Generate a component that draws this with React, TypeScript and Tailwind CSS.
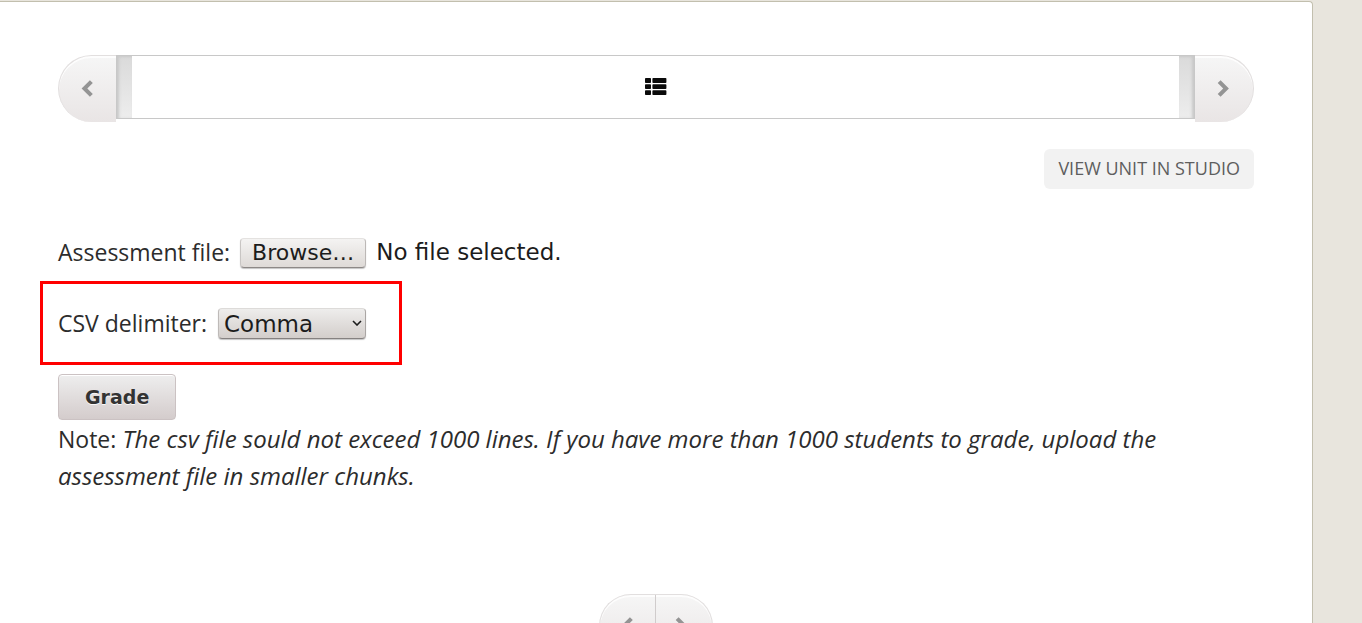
import { useState, type ReactNode } from "react";

type ArrowProps = { direction: "left" | "right" };

function Arrow({ direction }: ArrowProps) {
  return (
    <svg width="14" height="20" viewBox="0 0 14 20" fill="#949494" aria-hidden="true">
      <path d={direction === "left" ? "M8.9 1.2 11.8 3.9 6.3 9.4l5.5 5.5-2.9 2.8L.6 9.4z" : "M3.6 1.2.7 3.9l5.5 5.5-5.5 5.5 2.9 2.8 8.3-8.3z"} />
    </svg>
  );
}

function NavButton({ label, className, children }: { label: string; className: string; children: ReactNode }) {
  return (
    <button
      type="button"
      aria-label={label}
      className={`flex shrink-0 items-center justify-center border-[#e2dfdf] bg-linear-to-b from-[#f6f6f6] to-[#e9e5e5] shadow-[inset_0_2px_0_#fdfdfd] ${className}`}
    >
      {children}
    </button>
  );
}

function ListIcon() {
  return (
    <svg width="22" height="18" viewBox="0 0 22 18" fill="#0a0a0a" aria-hidden="true">
      <rect x="0" y="0" width="6" height="5" rx="0.8" />
      <rect x="7.4" y="0" width="14" height="5" rx="0.8" />
      <rect x="0" y="6.2" width="6" height="4.8" rx="0.8" />
      <rect x="7.4" y="6.2" width="14" height="4.8" rx="0.8" />
      <rect x="0" y="12.2" width="6" height="4.8" rx="0.8" />
      <rect x="7.4" y="12.2" width="14" height="4.8" rx="0.8" />
    </svg>
  );
}

export default function App() {
  const [fileName, setFileName] = useState("No file selected.");

  return (
    <div className="flex min-h-screen flex-col bg-[#e8e5dd] pt-px pr-12 font-['Open_Sans',sans-serif] text-[23px] leading-[37px] text-[#2c2c2c]">
      <main className="mr-px grow rounded-tr border-t border-r border-[#c2bfae] bg-white px-[58px] pt-[53px] pb-10">
        <nav aria-label="Unit sequence" className="flex items-start">
          <NavButton label="Previous" className="h-[67px] w-[58px] rounded-l-[35px] border-t border-l">
            <Arrow direction="left" />
          </NavButton>
          <div className="flex h-16 grow border border-[#c8c8c8]">
            <div className="w-[15px] bg-linear-to-b from-[#dadada] to-[#ededed] shadow-[inset_2px_1px_3px_#c8c8c8]" />
            <button type="button" aria-label="Unit" className="flex grow items-center justify-center">
              <ListIcon />
            </button>
            <div className="w-[15px] bg-linear-to-b from-[#dadada] to-[#ededed] shadow-[inset_-2px_1px_3px_#c8c8c8]" />
          </div>
          <NavButton label="Next" className="h-[67px] w-[59px] rounded-r-[35px] border-t border-r">
            <Arrow direction="right" />
          </NavButton>
        </nav>

        <div className="mt-[27px] flex justify-end">
          <a href="#studio" className="flex h-10 items-center rounded-md bg-[#f2f2f2] px-[14px] pb-0.5 text-[18px] text-[#5e5e5e]">
            VIEW UNIT IN STUDIO
          </a>
        </div>

        <form onSubmit={(event) => event.preventDefault()}>
          <div className="mt-[45px] flex h-[37px] items-center">
            <label htmlFor="assessment" className="flex items-center gap-[10px]">
              Assessment file:
              <span className="flex h-[30px] items-center rounded border border-t-[#e4e2e0] border-r-[#bcb8b6] border-b-[#8c8886] border-l-[#c8c5c3] bg-linear-to-b from-[#f4f3f2] to-[#dedad7] px-[11px] font-['DejaVu_Sans',sans-serif] text-[22px] text-[#1c1c1c] shadow-[0_1px_1px_#c4c4c4]">
                Browse…
              </span>
              <span className="font-['DejaVu_Sans',sans-serif] text-[#1c1c1c]">{fileName}</span>
            </label>
            <input
              id="assessment"
              type="file"
              className="sr-only"
              onChange={(event) => setFileName(event.target.files?.[0]?.name ?? "No file selected.")}
            />
          </div>

          <div className="mt-[10px] -ml-[18px] flex h-[84px] w-[362px] items-center border-3 border-[#ff0000] px-[15px]">
            <label htmlFor="delimiter">CSV delimiter:</label>
            <div className="relative ml-[11px] flex items-center">
              <select
                id="delimiter"
                className="h-[31px] w-[148px] appearance-none rounded border border-t-[#dddbd9] border-r-[#aaa6a4] border-b-[#858180] border-l-[#bebab8] bg-linear-to-b from-[#eeedec] to-[#d3cecb] pt-px pl-[5px] font-['DejaVu_Sans',sans-serif] text-[23px] leading-7 text-[#1c1c1c] shadow-[0_1px_1px_#c4c4c4]"
              >
                <option>Comma</option>
                <option>Semicolon</option>
              </select>
              <svg width="10" height="6" viewBox="0 0 10 6" fill="none" stroke="#1c1c1c" strokeWidth="1.6" className="pointer-events-none absolute right-1" aria-hidden="true">
                <path d="M1 1l4 4 4-4" />
              </svg>
            </div>
          </div>

          <button
            type="submit"
            className="mt-[9px] flex h-[46px] items-center rounded border border-[#cbc2c3] bg-linear-to-b from-[#eeeeee] to-[#d4cccc] px-[26px] font-['DejaVu_Sans',sans-serif] text-[19px] font-bold text-[#333333] shadow-[inset_0_1px_0_#ffffff] text-shadow-[0_1px_0_#f8f8f8]"
          >
            Grade
          </button>
        </form>

        <p className="text-2xl leading-[37px]">
          <span className="text-[23px] leading-8">Note:</span>{" "}
          <em>
            The csv file sould not exceed 1000 lines. If you have more than 1000 students to grade, upload the assessment file in smaller chunks.
          </em>
        </p>

        <nav aria-label="Unit navigation" className="mt-[100px] flex justify-center">
          <NavButton label="Previous unit" className="h-16 w-[57px] rounded-l-[35px] border border-r-[#d0cccc]">
            <Arrow direction="left" />
          </NavButton>
          <NavButton label="Next unit" className="h-16 w-[57px] rounded-r-[35px] border-y border-r pr-1">
            <Arrow direction="right" />
          </NavButton>
        </nav>
      </main>
    </div>
  );
}
